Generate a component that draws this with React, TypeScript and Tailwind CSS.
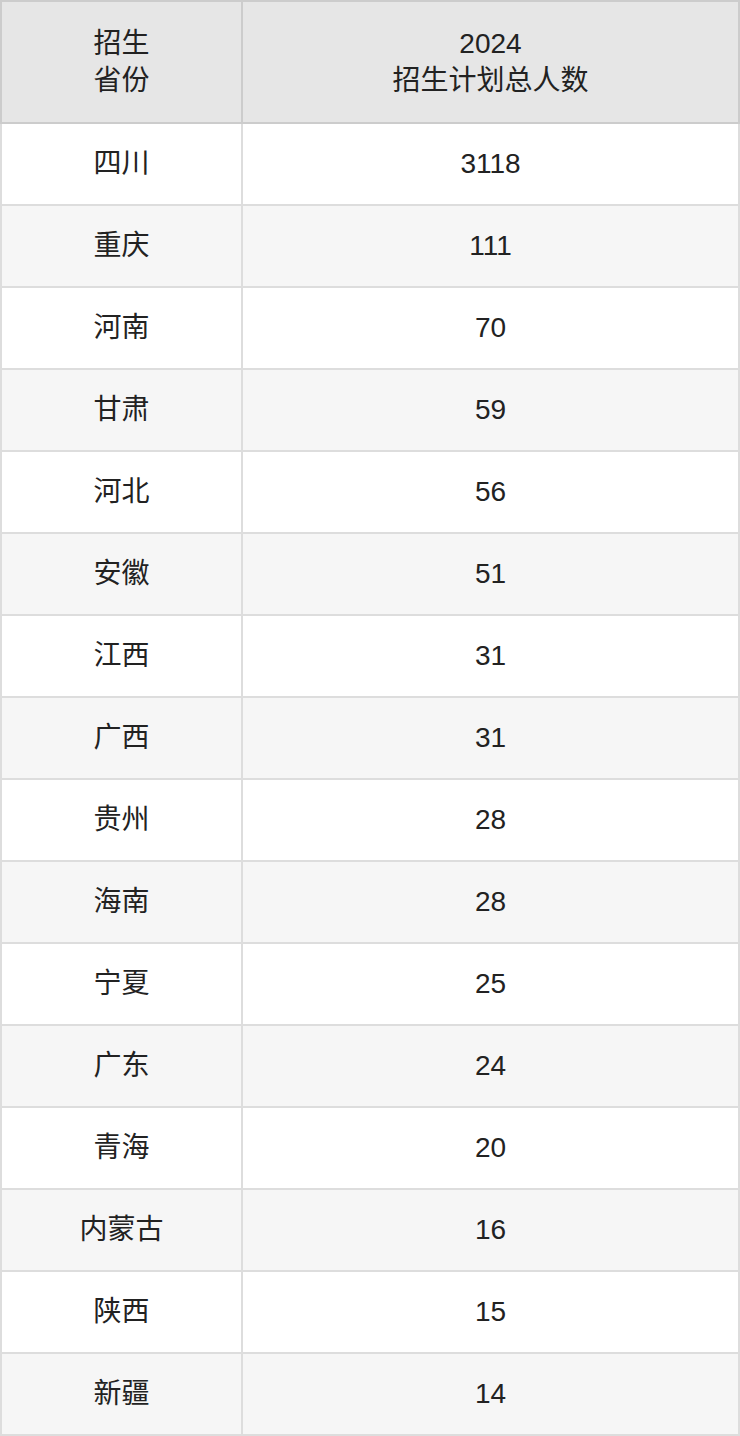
import React from 'react';

const rows: [string, string][] = [
  ['四川', '3118'],
  ['重庆', '111'],
  ['河南', '70'],
  ['甘肃', '59'],
  ['河北', '56'],
  ['安徽', '51'],
  ['江西', '31'],
  ['广西', '31'],
  ['贵州', '28'],
  ['海南', '28'],
  ['宁夏', '25'],
  ['广东', '24'],
  ['青海', '20'],
  ['内蒙古', '16'],
  ['陕西', '15'],
  ['新疆', '14'],
];

export default function App() {
  return (
    <div className="w-[740px] bg-white text-[#222222] text-[28px] font-['Liberation_Sans','Noto_Sans_CJK_SC',sans-serif]">
      {/* 表头 */}
      <div className="flex h-[124px] border-2 border-[#cccccc] bg-[#e6e6e6] leading-[37px]">
        <div className="w-[241px] shrink-0 border-r-2 border-[#cccccc] flex flex-col items-center justify-center">
          <span>招生</span>
          <span>省份</span>
        </div>
        <div className="flex-1 flex flex-col items-center justify-center">
          <span>2024</span>
          <span>招生计划总人数</span>
        </div>
      </div>

      {rows.map(([province, count], i) => (
        <div
          key={province}
          className={`flex h-[82px] border-x-2 border-b-2 border-[#dddddd] ${i % 2 === 0 ? 'bg-white' : 'bg-[#f6f6f6]'}`}
        >
          <div className="w-[241px] shrink-0 border-r-2 border-[#dddddd] flex items-center justify-center">
            {province}
          </div>
          <div className="flex-1 flex items-center justify-center">{count}</div>
        </div>
      ))}
    </div>
  );
}
